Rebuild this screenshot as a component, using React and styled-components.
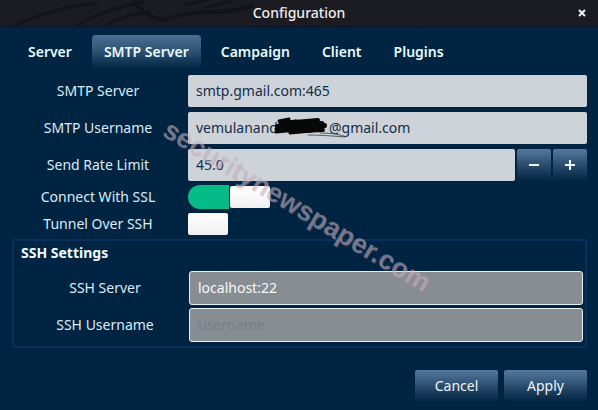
import React, { useState } from "react";
import styled, { createGlobalStyle } from "styled-components";

const GlobalStyle = createGlobalStyle`
  *, *::before, *::after { box-sizing: border-box; }
  body {
    margin: 0;
    background: #002441;
    color: #dcebf7;
    font-family: "Noto Sans", "Open Sans", sans-serif;
    font-size: 14px;
    line-height: 20px;
  }
  button, input { font: inherit; }
`;

const Dialog = styled.main`
  position: relative;
  display: flex;
  flex-direction: column;
  min-height: 100vh;
  overflow: hidden;
  background: #002441;
`;

const TitleBar = styled.header`
  position: relative;
  display: grid;
  grid-template-columns: 32px 1fr 32px;
  align-items: center;
  height: 27px;
  background: #1b1c22;
  border-bottom: 1px solid #0a1526;
`;

const DragonArt = styled.svg`
  position: absolute;
  top: 0;
  left: 0;
  fill: none;
  stroke: #131419;
`;

const Title = styled.h1`
  position: relative;
  grid-column: 2;
  margin: 0;
  text-align: center;
  font-size: 14px;
  font-weight: 500;
  color: #eeeeee;
`;

const CloseButton = styled.button`
  display: grid;
  place-items: center;
  height: 24px;
  padding: 0;
  border: 0;
  background: none;
  color: #f2f2f2;
`;

const Tabs = styled.div`
  display: flex;
  gap: 8px;
  padding: 8px 16px 0;
`;

const Tab = styled.button`
  height: 34px;
  padding: 0 12px;
  border: 0;
  border-radius: 4px 4px 0 0;
  background: ${(p) => (p.$active ? "linear-gradient(#4c7093, #2c5072 50%, #002441)" : "none")};
  color: #e9fbff;
  font-weight: 600;
  white-space: nowrap;
`;

const Form = styled.form`
  display: flex;
  flex: 1;
  flex-direction: column;
  padding: 6px 11px 8px 12px;
`;

const Fields = styled.div`
  display: grid;
  gap: 5px;
`;

const Row = styled.div`
  display: grid;
  grid-template-columns: ${(p) => (p.$inset ? "164px" : "176px")} 1fr;
  align-items: center;
`;

const Label = styled.label`
  padding-right: 4px;
  text-align: center;
  white-space: nowrap;
`;

const TextInput = styled.input`
  width: 100%;
  min-width: 0;
  height: 32px;
  padding: 0 8px 2px;
  border: 0;
  border-radius: 2px;
  background: #cdd3d9;
  color: #142d4b;
`;

const SshInput = styled(TextInput)`
  height: 34px;
  border: 1px solid #e8f2f5;
  border-radius: 3px;
  background: #888d92;
  color: #f4f9fc;
  opacity: 1;
  &::placeholder { color: #787f84; opacity: 1; }
`;

const Redacted = styled.div`
  position: relative;
`;

const Scribble = styled.svg`
  position: absolute;
  top: 3px;
  left: 84px;
  fill: none;
  stroke: #080808;
  stroke-linecap: round;
  stroke-linejoin: round;
  pointer-events: none;
`;

const Spinner = styled.div`
  display: grid;
  grid-template-columns: 1fr 34px 34px;
  gap: 2px;
`;

const Button = styled.button`
  display: grid;
  place-items: center;
  height: 32px;
  padding: 0;
  border: 0;
  border-radius: 2px;
  background: linear-gradient(#557a9f, #2b4c6d 50%, #002441);
  color: #edf6fb;
`;

const Switches = styled.div`
  display: grid;
  gap: 3px;
  padding: 4px 0 3px;
`;

const Switch = styled.input`
  appearance: none;
  display: flex;
  width: 82px;
  height: 24px;
  margin: 0;
  align-items: center;
  border-radius: 12px 2px 2px 12px;

  &::after {
    content: "";
    width: 40px;
    height: 22px;
    border-radius: 2px;
    background: linear-gradient(#ffffff, #f1f0f0);
  }
  &:checked { background: linear-gradient(90deg, #05bc87 41px, transparent 41px); }
  &:checked::after { margin-left: auto; }
`;

const Group = styled.fieldset`
  display: grid;
  gap: 3px;
  min-width: 0;
  margin: 0;
  padding: 2px 2px 4px 11px;
  border: 2px solid #08305a;
`;

const GroupTitle = styled.h2`
  margin: 0 0 5px -4px;
  font-size: 14px;
  font-weight: 700;
  line-height: 20px;
  color: #f1faff;
`;

const Actions = styled.footer`
  display: grid;
  grid-template-columns: 83px 83px;
  justify-content: end;
  gap: 6px;
  margin-top: auto;
`;

const Watermark = styled.div`
  position: absolute;
  top: 206px;
  left: 297px;
  transform: translate(-50%, -50%) rotate(31deg);
  font: bold 27px/30px "Liberation Sans", sans-serif;
  color: rgba(190, 184, 198, 0.54);
  text-shadow: 1px 1px 0 rgba(220, 110, 120, 0.2);
  white-space: nowrap;
  pointer-events: none;
`;

const TABS = ["Server", "SMTP Server", "Campaign", "Client", "Plugins"];

export default function App() {
  const [tab, setTab] = useState("SMTP Server");
  const [rate, setRate] = useState(45);

  return (
    <>
      <GlobalStyle />
      <Dialog>
        <TitleBar>
          <DragonArt width="260" height="26" viewBox="0 0 260 26" aria-hidden="true">
            <path d="M14 26Q50 8 98 3M76 26Q104 9 144 2M104 26Q129 13 151 12" strokeWidth="3" />
            <path d="M133 0Q148 19 164 20Q174 15 204 12Q232 13 254 5" strokeWidth="4" />
            <path d="M184 5L208 0M205 8L231 1" strokeWidth="3" />
          </DragonArt>
          <Title>Configuration</Title>
          <CloseButton type="button" aria-label="Close">
            <svg width="8" height="8" viewBox="0 0 8 8" stroke="currentColor" strokeWidth="2">
              <path d="M1 1L7 7M7 1L1 7" />
            </svg>
          </CloseButton>
        </TitleBar>

        <Tabs role="tablist">
          {TABS.map((name) => (
            <Tab key={name} type="button" role="tab" aria-selected={tab === name} $active={tab === name} onClick={() => setTab(name)}>
              {name}
            </Tab>
          ))}
        </Tabs>

        <Form onSubmit={(e) => e.preventDefault()}>
          <Fields>
            <Row>
              <Label htmlFor="smtp-server">SMTP Server</Label>
              <TextInput id="smtp-server" defaultValue="smtp.gmail.com:465" />
            </Row>
            <Row>
              <Label htmlFor="smtp-user">SMTP Username</Label>
              <Redacted>
                <TextInput id="smtp-user" defaultValue={"vemulanand" + "\u00a0".repeat(14) + "@gmail.com"} />
                <Scribble width="78" height="24" viewBox="0 0 78 24" aria-hidden="true">
                  <path d="M7 6L17 4L8 8L24 6L4 11L34 8L4 14L32 11L4 17L36 14L18 18L40 16" strokeWidth="3" />
                  <path d="M22 7L46 5L26 10L50 8L30 13L53 11L30 16L51 15M45 7L53 10L47 14" strokeWidth="4" />
                  <path d="M36 20Q50 20 73 22Q66 18 48 18" stroke="#555d66" strokeWidth="1" />
                </Scribble>
              </Redacted>
            </Row>
            <Row>
              <Label htmlFor="rate">Send Rate Limit</Label>
              <Spinner>
                <TextInput id="rate" readOnly value={rate.toFixed(1)} />
                <Button type="button" aria-label="Decrease" onClick={() => setRate(rate - 1)}>
                  <svg width="10" height="10" viewBox="0 0 10 10" stroke="currentColor" strokeWidth="2">
                    <path d="M0 5H10" />
                  </svg>
                </Button>
                <Button type="button" aria-label="Increase" onClick={() => setRate(rate + 1)}>
                  <svg width="10" height="10" viewBox="0 0 10 10" stroke="currentColor" strokeWidth="2">
                    <path d="M0 5H10M5 0V10" />
                  </svg>
                </Button>
              </Spinner>
            </Row>
          </Fields>

          <Switches>
            <Row>
              <Label htmlFor="ssl">Connect With SSL</Label>
              <Switch id="ssl" type="checkbox" role="switch" defaultChecked />
            </Row>
            <Row>
              <Label htmlFor="tunnel">Tunnel Over SSH</Label>
              <Switch id="tunnel" type="checkbox" role="switch" />
            </Row>
          </Switches>

          <Group aria-labelledby="ssh-title">
            <GroupTitle id="ssh-title">SSH Settings</GroupTitle>
            <Row $inset>
              <Label htmlFor="ssh-server">SSH Server</Label>
              <SshInput id="ssh-server" defaultValue="localhost:22" disabled />
            </Row>
            <Row $inset>
              <Label htmlFor="ssh-user">SSH Username</Label>
              <SshInput id="ssh-user" placeholder="username" disabled />
            </Row>
          </Group>

          <Actions>
            <Button type="button">Cancel</Button>
            <Button type="submit">Apply</Button>
          </Actions>
        </Form>

        <Watermark>securitynewspaper.com</Watermark>
      </Dialog>
    </>
  );
}
